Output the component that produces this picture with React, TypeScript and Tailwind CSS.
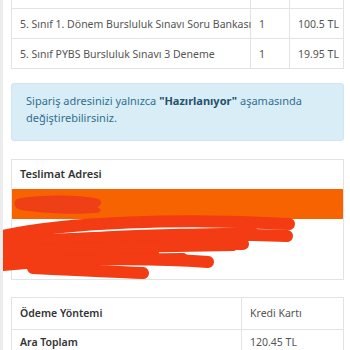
const items = [
  { name: "5. Sınıf 1. Dönem Bursluluk Sınavı Soru Bankası", qty: "1", price: "100.5 TL" },
  { name: "5. Sınıf PYBS Bursluluk Sınavı 3 Deneme", qty: "1", price: "19.95 TL" },
];

const Scribbles = () => (
  <svg
    className="pointer-events-none absolute left-0 top-0"
    width="350"
    height="350"
    viewBox="0 0 350 350"
  >
    {/* blob over the orange band */}
    <path
      d="M14 199 C40 194 80 195 96 199 C100 202 98 206 94 207 C99 209 99 213 92 213 C70 215 40 213 18 210 C10 208 10 201 14 199 Z"
      fill="#ef3f17"
    />
    <path
      d="M0 236 C60 222 180 218 286 224 M0 246 C80 236 200 232 284 236 M0 256 C60 246 160 242 240 244 M0 265 C70 258 150 258 205 262 M24 254 C60 252 110 252 150 253 M30 268 C70 270 110 272 140 273"
      stroke="#f33b14"
      strokeWidth="12"
      strokeLinecap="round"
      fill="none"
    />
    <path
      d="M10 240 L250 232 M0 250 L230 246 M20 260 L180 258"
      stroke="#f33b14"
      strokeWidth="10"
      strokeLinecap="round"
      fill="none"
    />
  </svg>
);

export default function App() {
  return (
    <div
      className="relative h-[350px] w-[350px] overflow-hidden border-l-[3px] border-[#ececec] bg-white pl-2 pr-[6px] text-[10.5px] text-[#555]"
      style={{ fontFamily: '"Noto Sans", "Open Sans", sans-serif' }}
    >
      {/* products table */}
      <div className="border-x border-b border-[#e3e3e3]">
        <div className="grid h-2 grid-cols-[239px_39px_1fr]">
          <div className="border-r border-[#e3e3e3]" />
          <div className="border-r border-[#e3e3e3]" />
          <div />
        </div>
        {items.map((it) => (
          <div
            key={it.name}
            className="grid h-[30px] grid-cols-[239px_39px_1fr] border-t border-[#e3e3e3]"
          >
            <div className="flex items-center whitespace-nowrap border-r border-[#e3e3e3] pl-2 pt-[2px]">
              {it.name}
            </div>
            <div className="flex items-center border-r border-[#e3e3e3] pl-2 pt-[2px]">{it.qty}</div>
            <div className="flex items-center whitespace-nowrap pl-2 pt-[2px]">{it.price}</div>
          </div>
        ))}
      </div>

      {/* info alert */}
      <div className="mt-[14px] h-[58px] rounded-[3px] border border-[#cfe6f2] bg-[#d9edf7] px-[14px] pt-[8px] text-[11px] leading-[17px] text-[#31708f]">
        Sipariş adresinizi yalnızca <b className="text-[#245269]">"Hazırlanıyor"</b> aşamasında
        <br />
        değiştirebilirsiniz.
      </div>

      {/* delivery address */}
      <div className="mt-[18px] h-[121px] border border-[#e3e3e3]">
        <div className="flex h-[29px] items-center pl-2 text-[11px] font-semibold text-[#333]">
          Teslimat Adresi
        </div>
        <div className="h-[30px] bg-[#f76300]" />
      </div>

      {/* payment table */}
      <div className="mt-[17px] border-x border-t border-[#e3e3e3]">
        <div className="grid h-[31px] grid-cols-[230px_1fr]">
          <div className="flex items-center border-r border-[#e3e3e3] pl-2 font-semibold text-[#333]">
            Ödeme Yöntemi
          </div>
          <div className="flex items-center pl-2">Kredi Kartı</div>
        </div>
        <div className="grid h-[30px] grid-cols-[230px_1fr] border-t border-[#e3e3e3]">
          <div className="border-r border-[#e3e3e3] pl-2 pt-[5px] font-semibold text-[#333]">
            Ara Toplam
          </div>
          <div className="pl-2 pt-[5px]">120.45 TL</div>
        </div>
      </div>

      <Scribbles />
    </div>
  );
}
